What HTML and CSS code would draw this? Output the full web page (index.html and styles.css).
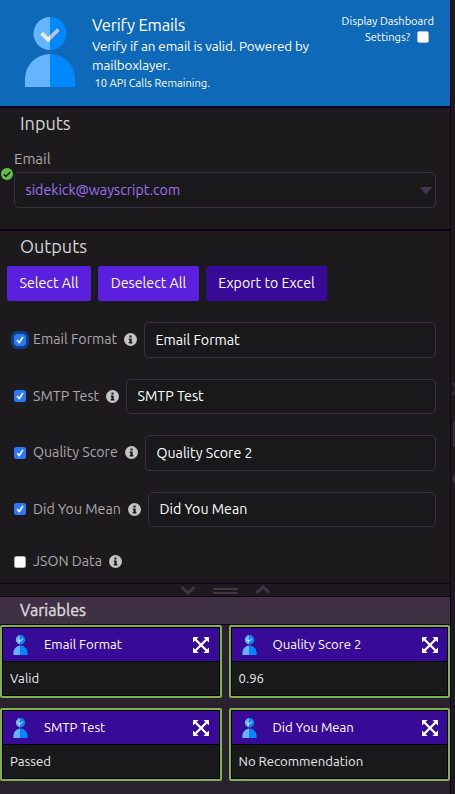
FILE: index.html
```html
<!DOCTYPE html>
<html lang="en">
<head>
<meta charset="utf-8">
<title>Verify Emails</title>
<link rel="stylesheet" href="styles.css">
</head>
<body>
<svg class="defs" width="0" height="0">
  <symbol id="person" viewBox="0 0 50 70">
    <path fill="#66b3ff" d="M25 0A16.5 16.5 0 0 0 25 33zM25 37A25 25 0 0 0 0 62V70H25z"/>
    <path fill="#0089ff" d="M25 0A16.5 16.5 0 0 1 25 33zM25 37A25 25 0 0 1 50 62V70H25z"/>
    <path fill="#ececec" d="M25 18.2L23.2 20L18 14.8L15.4 17.8L23.2 25.4L25 23.6z"/>
    <path fill="#c4c4c8" d="M25 18.2L32 11.2L34.8 13.8L25 23.6z"/>
  </symbol>
  <symbol id="info" viewBox="0 0 12 12">
    <circle cx="6" cy="6" r="6" fill="#c5c4c5"/>
    <path fill="#1c191c" d="M5 2.3h2v1.8H5zM4.4 5h2.7v3.4h.6v1.2H4.4V8.4H5V6.2h-.6z"/>
  </symbol>
  <symbol id="checked" viewBox="0 0 12 12">
    <rect width="12" height="12" rx="2.5" fill="#2d78fa"/>
    <path fill="none" stroke="#fff" stroke-width="1.6" stroke-linecap="round" stroke-linejoin="round" d="M3.5 6.6L5.2 8.7L8.6 3.4"/>
  </symbol>
  <symbol id="unchecked" viewBox="0 0 12 12">
    <rect x=".3" y=".3" width="11.4" height="11.4" rx="2.3" fill="#fff" stroke="#aaa" stroke-width=".6"/>
  </symbol>
  <symbol id="expand" viewBox="0 0 16 16">
    <path fill="none" stroke="#fff" stroke-width="2.3" d="M2 2L14 14M14 2L2 14"/>
    <path fill="#fff" d="M.6 0H5.600L0 5.600V.6zM15.4 0H10.400L16 5.600V.6zM.6 16H5.600L0 10.400V15.400zM15.4 16H10.400L16 10.400V15.400z"/>
  </symbol>
</svg>
<div class="app">
  <main class="panel">
    <header class="hero">
      <svg class="hero-icon"><use href="#person"/></svg>
      <div class="hero-text">
        <h1>Verify Emails</h1>
        <p class="desc">Verify if an email is valid. Powered by<br>mailboxlayer.</p>
        <p class="calls">10 API Calls Remaining.</p>
      </div>
      <div class="dashboard">Display Dashboard<br>Settings?<svg class="box"><use href="#unchecked"/></svg></div>
    </header>
    <section class="inputs">
      <h2>Inputs</h2>
      <div class="email-label">Email</div>
      <div class="email-row">
        <svg class="ok" viewBox="0 0 12 12"><circle cx="6" cy="6" r="6" fill="#62c046"/><path d="M2.8 6.2L5 8.4L9.2 4" fill="none" stroke="#1c191c" stroke-width="1.5"/></svg>
        <div class="field select"><span>sidekick@wayscript.com</span>
          <svg class="arrow" viewBox="0 0 12 8"><path d="M0 0H12L6 8z" fill="#44364c"/></svg>
        </div>
      </div>
    </section>
    <section class="outputs">
      <h2>Outputs</h2>
      <div class="buttons">
        <div class="btn b1">Select All</div>
        <div class="btn b2">Deselect All</div>
        <div class="btn b3">Export to Excel</div>
      </div>
      <div class="rows">
        <div class="row r1"><svg class="box focus"><use href="#checked"/></svg><label>Email Format</label><svg class="info"><use href="#info"/></svg><div class="field"><span>Email Format</span></div></div>
        <div class="row r2"><svg class="box"><use href="#checked"/></svg><label>SMTP Test</label><svg class="info"><use href="#info"/></svg><div class="field"><span>SMTP Test</span></div></div>
        <div class="row r3"><svg class="box"><use href="#checked"/></svg><label>Quality Score</label><svg class="info"><use href="#info"/></svg><div class="field"><span>Quality Score 2</span></div></div>
        <div class="row r4"><svg class="box"><use href="#checked"/></svg><label>Did You Mean</label><svg class="info"><use href="#info"/></svg><div class="field"><span>Did You Mean</span></div></div>
        <div class="row r5"><svg class="box"><use href="#unchecked"/></svg><label>JSON Data</label><svg class="info"><use href="#info"/></svg></div>
      </div>
    </section>
    <div class="handle">
      <svg width="90" height="12" viewBox="0 0 90 12" fill="none" stroke="#44344a"><path stroke-width="2.8" d="M1.500 3L8 9L14.500 3M76.500 9L83 3L89.500 9"/><path stroke-width="2" d="M33 5H58M33 9H58"/></svg>
    </div>
    <div class="var-title">Variables</div>
    <section class="vars">
      <article class="card"><div class="card-head"><svg class="mini"><use href="#person"/></svg><span>Email Format</span><svg class="expand"><use href="#expand"/></svg></div><div class="card-body"><span>Valid</span></div></article>
      <article class="card"><div class="card-head"><svg class="mini"><use href="#person"/></svg><span>Quality Score 2</span><svg class="expand"><use href="#expand"/></svg></div><div class="card-body"><span>0.96</span></div></article>
      <article class="card"><div class="card-head"><svg class="mini"><use href="#person"/></svg><span>SMTP Test</span><svg class="expand"><use href="#expand"/></svg></div><div class="card-body"><span>Passed</span></div></article>
      <article class="card"><div class="card-head"><svg class="mini"><use href="#person"/></svg><span>Did You Mean</span><svg class="expand"><use href="#expand"/></svg></div><div class="card-body"><span>No Recommendation</span></div></article>
    </section>
  </main>
  <aside class="strip">
    <svg width="3" height="102" viewBox="0 0 3 102"><g fill="none" stroke="#362b3a" stroke-width="2.500"><path d="M0 1L6 7L0 13M7 88L1 97L7 106"/></g><path d="M1 40H3V65H1z" fill="#362b3a"/></svg>
  </aside>
</div>
</body>
</html>
```
FILE: styles.css
```css
* { box-sizing: border-box; }
body { margin: 0; background: #1d1a1d; font-family: Ubuntu, "Noto Sans", sans-serif; font-size: 14.2px; color: #fff; white-space: nowrap; }
h1, h2, p { margin: 0; font-weight: 400; }
svg { display: block; flex: none; }
.defs { position: absolute; }
.app { display: flex; width: 455px; height: 794px; overflow: hidden; }
.panel { width: 451px; flex: none; }
.strip { width: 4px; padding: 382px 0 0 1px; }
.hero, .inputs, .outputs, .handle, .var-title, .vars { border-right: 1px solid #160020; }
.hero { display: flex; height: 108px; background: #0f69b9; border-bottom: 2px solid #10001c; border-right-color: #160020; }
.hero-icon { width: 50px; height: 70px; margin: 17px 17px 0 25px; }
.hero-text { width: 238px; padding-top: 14px; }
h1 { font-size: 16.600px; line-height: 23px; letter-spacing: -.2px; }
.desc { font-size: 13.400px; line-height: 19px; letter-spacing: -.1px; }
.calls { font-size: 11.100px; line-height: 17px; padding: 0 0 0 2.5px; }
.dashboard { width: 104px; padding-top: 13px; font-size: 11.1px; line-height: 16px; text-align: right; }
.box { display: inline-block; width: 12px; height: 12px; }
.dashboard .box { margin: 0 5px 0 7px; vertical-align: -2px; }
.inputs { height: 123px; border-bottom: 2px solid #10001c; }
h2 { font-size: 18px; line-height: 24px; color: #d5d3d5; padding-left: 20px; }
.inputs h2, .outputs h2 { padding-top: 3px; margin-bottom: 1px; }
.email-label { margin: 13px 0 0 14px; height: 24px; line-height: 21px; font-size: 15px; color: #aaa8aa; }
.email-row { display: flex; align-items: flex-start; padding-left: 1px; }
.ok { width: 12px; height: 12px; margin: -4px 1px 0 0; }
.field { display: flex; align-items: center; flex: 1; height: 100%; border: 1px solid #3d3042; border-radius: 5px; background: #19191b; padding-left: 10.5px; }
.row:nth-child(even) .field { padding-bottom: 1px; }
.select { flex: none; width: 422px; height: 36px; justify-content: space-between; padding-right: 3px; color: #9e72f4; }
.arrow { width: 12px; height: 8px; margin-top: 2px; }
.outputs { height: 352px; }
.buttons { display: flex; gap: 7px; padding: 7px 0 0 7px; }
.btn { display: flex; align-items: center; justify-content: center; height: 35px; padding-bottom: 1px; border-radius: 2px; background: #5b20dd; }
.b1 { width: 84px; }
.b2 { width: 101px; }
.b3 { width: 121px; background: #370a97; }
.rows { display: flex; flex-direction: column; gap: 21px; padding: 21px 14px 0 14px; }
.row { display: flex; align-items: center; height: 36px; }
.row:nth-child(even) { height: 35px; }
.row:nth-child(even) .box { margin-bottom: 1px; }
.focus { border-radius: 3px; box-shadow: 0 0 0 3px #0b3f85; }
.row label { width: 91px; margin-left: 7px; padding-bottom: 2px; color: #aaa8aa; }
.row.r2 label { width: 73px; }
.row.r3 label { width: 92px; }
.row.r4 label { width: 95px; }
.row.r5 label { width: 76px; padding-bottom: 0; }
.row.r5 { height: 26px; }
.row.r5 .box { margin-top: 2px; }
.info { width: 13px; height: 13px; margin: 0 7px 1px 0; }
.row.r5 .info { margin-bottom: 0; }
.handle { height: 14px; border-top: 1px solid #160020; border-bottom: 1px solid #160020; padding-left: 180px; }
.var-title { height: 28px; background: #3f3044; border-bottom: 1px solid #160020; padding-left: 20px; font-size: 16.100px; line-height: 26px; color: #dcd9dd; -webkit-text-stroke: .4px #dcd9dd; }
.vars { display: grid; grid-template-columns: 222px 221px; grid-auto-rows: 73px; gap: 10px 7px; align-content: start; height: 169px; background: #2a212f; }
.card { border: 2px solid #82b04e; border-radius: 2px; background: #000; padding: 1px; font-size: 13.150px; }
.card-head { display: flex; align-items: center; height: 33px; background: #370a97; padding: 0 10px; }
.card:nth-child(even) .card-head { padding-right: 9.5px; }
.card-head span { flex: 1; margin-left: 16px; padding-bottom: 2px; }
.card:nth-child(even) span { position: relative; left: -.5px; }
.mini { width: 15px; height: 20px; }
.expand { width: 16px; height: 16px; }
.card-body { display: flex; align-items: center; height: 33px; margin-top: 1px; padding-bottom: 2px; background: #19191b; padding-left: 7px; color: #e8e8e8; }
```
